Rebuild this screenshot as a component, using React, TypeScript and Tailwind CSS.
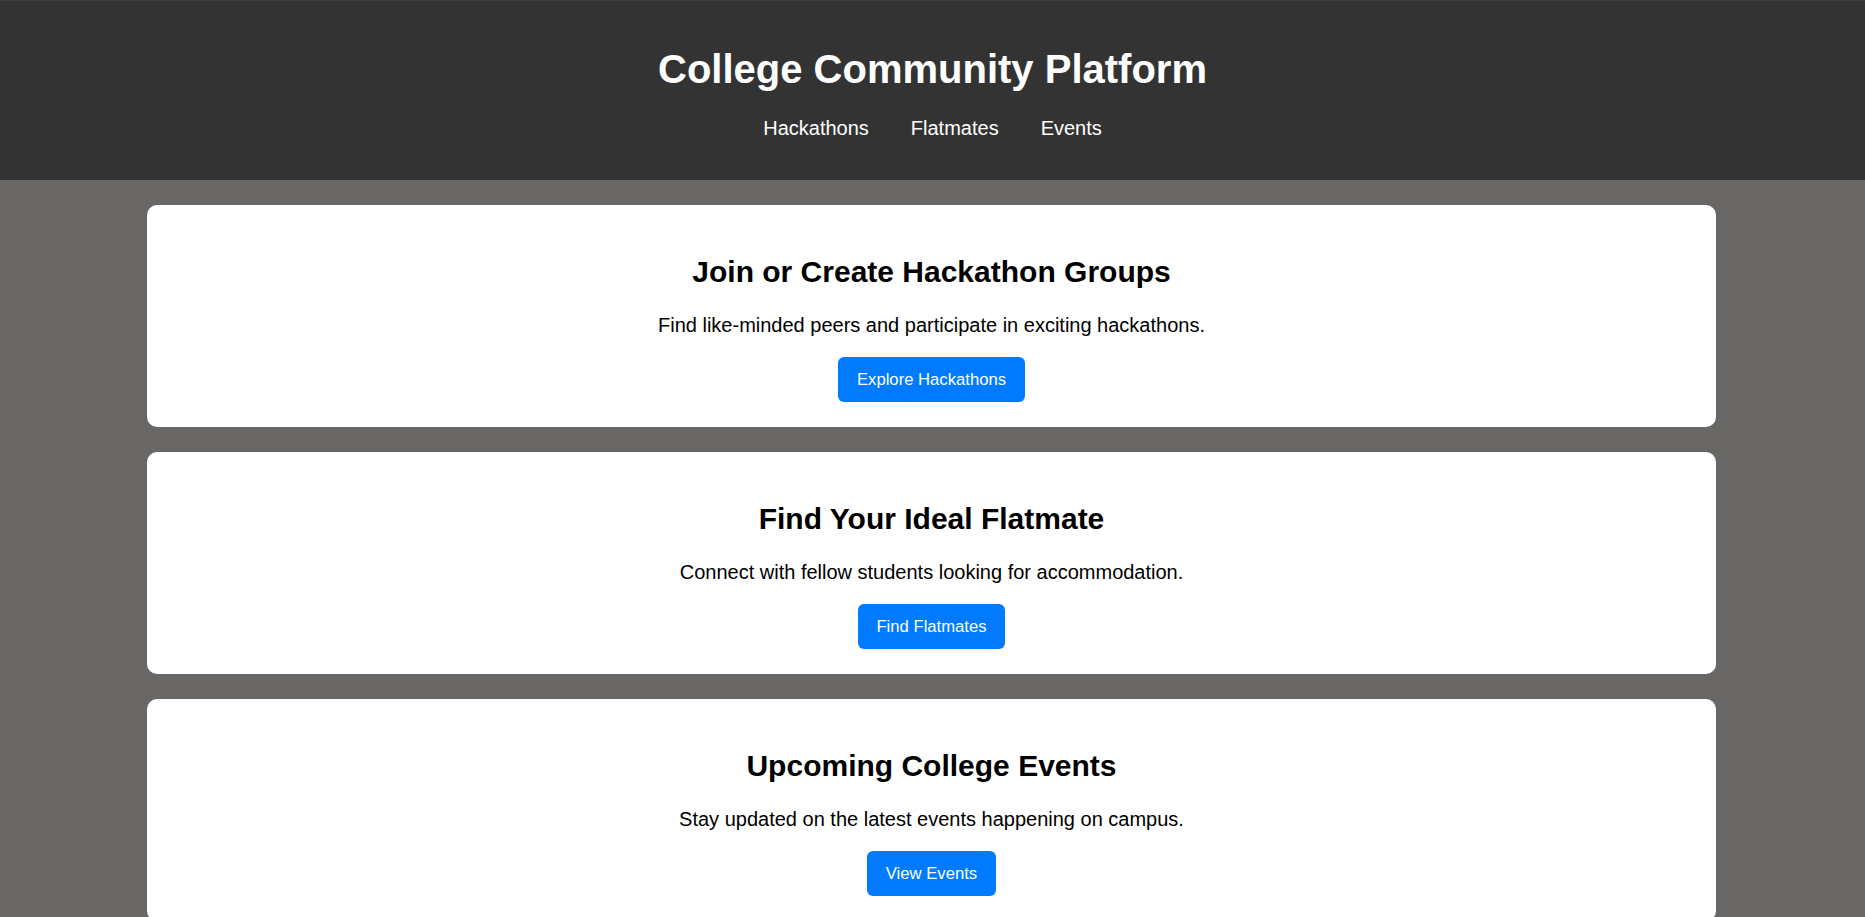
import React from "react";

const sections = [
  {
    title: "Join or Create Hackathon Groups",
    text: "Find like-minded peers and participate in exciting hackathons.",
    button: "Explore Hackathons",
  },
  {
    title: "Find Your Ideal Flatmate",
    text: "Connect with fellow students looking for accommodation.",
    button: "Find Flatmates",
  },
  {
    title: "Upcoming College Events",
    text: "Stay updated on the latest events happening on campus.",
    button: "View Events",
  },
];

export default function App() {
  return (
    <div
      className="min-h-screen bg-[#686765] text-black"
      style={{ fontFamily: '"Liberation Sans", Arial, sans-serif' }}
    >
      <header className="bg-[#333333] border-t border-[#3c3c3e] text-white text-center pt-[45px] pb-[40px]">
        <h1 className="text-[40px] font-bold leading-[46px] mb-[25px]">College Community Platform</h1>
        <nav className="flex justify-center gap-[42px] text-[20px] leading-[23px]">
          <a className="text-white">Hackathons</a>
          <a className="text-white">Flatmates</a>
          <a className="text-white">Events</a>
        </nav>
      </header>
      <main className="flex flex-col gap-[25px] pt-[25px] pb-[25px] pl-[147px] pr-[149px]">
        {sections.map((s) => (
          <section key={s.title} className="bg-white rounded-[10px] p-[25px] text-center">
            <h2 className="text-[30px] font-bold leading-[34px] my-[25px]">{s.title}</h2>
            <p className="text-[20px] leading-[23px] mb-[20px]">{s.text}</p>
            <button className="bg-[#007bff] text-white text-[16.67px] leading-[20px] px-[18.75px] py-[12.5px] rounded-[6px]">
              {s.button}
            </button>
          </section>
        ))}
      </main>
    </div>
  );
}
